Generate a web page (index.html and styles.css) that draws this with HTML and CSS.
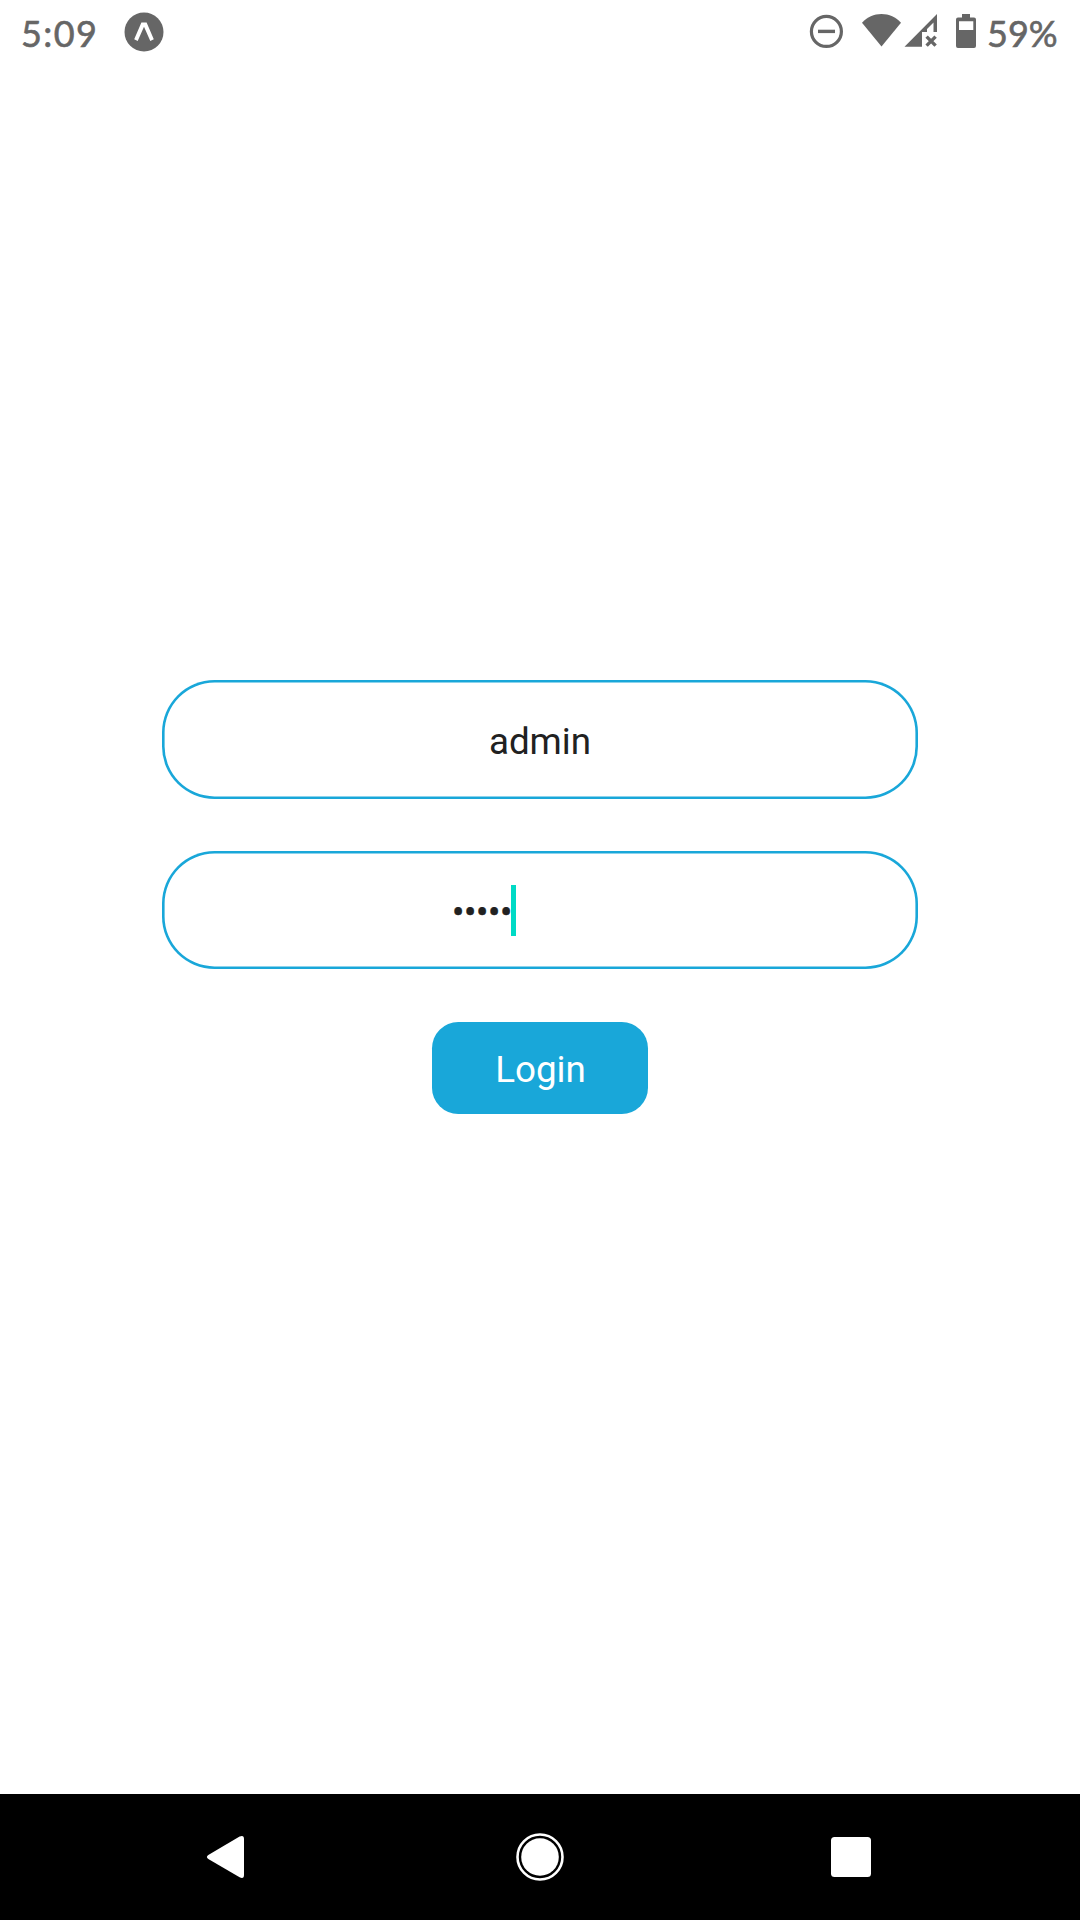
FILE: index.html
```html
<!DOCTYPE html>
<html lang="en">
<head>
<meta charset="utf-8">
<title>Login</title>
<link rel="stylesheet" href="styles.css">
</head>
<body>
<div class="screen">
  <header class="status">
    <span class="status-text clock">5:09</span>
    <svg class="expo" width="40" height="40" viewBox="0 0 40 40">
      <circle cx="20" cy="20" r="19.5" fill="#666"/>
      <path d="M10.200 27.200 17.400 10.500h5.200L29.800 27.200 26.300 28.900 20 14.800 13.700 28.900Z" fill="#fff"/>
    </svg>
    <svg class="system" width="170" height="60" viewBox="806 0 170 60">
      <circle cx="826.4" cy="31.4" r="15" fill="none" stroke="#666" stroke-width="3.2"/>
      <path d="M818 31.4h17" stroke="#666" stroke-width="3.4"/>
      <path d="M862 22.7C867 17 874 14 881.5 14S896 17 901 22.7L881.5 46.5Z" fill="#666"/>
      <path fill-rule="evenodd" d="M904.5 46.7 937 14V32H933.5V22.5L927 29V32H922V46.7Z" fill="#666"/>
      <path d="m926.6 36.6 9 9m0-9-9 9" stroke="#666" stroke-width="3.4"/>
      <path fill-rule="evenodd" d="M962 14h8v3.5h4q2 0 2 2v26.500q0 2-2 2H958q-2 0-2-2V19.500q0-2 2-2h4ZM959 21.300v8.700h14.300v-8.700Z" fill="#666"/>
    </svg>
    <span class="status-text battery">59%</span>
  </header>
  <main class="form">
    <div class="field"><span class="value">admin</span></div>
    <div class="field password"><span class="dots">•••••</span><span class="caret"></span></div>
    <div class="login"><span>Login</span></div>
  </main>
  <nav class="nav">
    <svg width="1080" height="126" viewBox="0 0 1080 126" fill="#fff">
      <path d="M208.300 61 239.600 42.500Q244 40.500 244 45V81Q244 85.300 239.600 83.300L208.300 65Q205.500 63 208.300 61Z"/>
      <circle cx="540" cy="63" r="22.500" fill="none" stroke="#fff" stroke-width="2.600"/>
      <circle cx="540" cy="63" r="18.800"/>
      <rect x="831" y="43" width="40" height="40" rx="3.500"/>
    </svg>
  </nav>
</div>
</body>
</html>
```
FILE: styles.css
```css
* { box-sizing: border-box; }
body { margin: 0; background: #fff; font-family: Roboto, sans-serif; }
.screen { width: 1080px; height: 1920px; display: flex; flex-direction: column; }
.status { height: 63px; display: flex; align-items: flex-start; padding-left: 21px; color: #666; }
.status-text { font: 400 36px/44px Lato, sans-serif; padding-top: 11px; -webkit-text-stroke: 0.6px #666; white-space: nowrap; }
.clock { width: 103px; letter-spacing: 1.4px; }
.expo { margin-top: 12px; }
.system { margin-left: 642px; overflow: visible; }
.battery { margin-left: 11px; }
.form { flex: 1; display: flex; flex-direction: column; align-items: center; padding-top: 617px; }
.field { width: 756px; height: 119px; margin-bottom: 52px; border-radius: 52.5px; box-shadow: inset 0 0 0 2.6px #19a7d9; display: flex; align-items: center; justify-content: center; font-size: 36.75px; line-height: 44px; color: #212121; }
.field.password { height: 118px; margin-bottom: 53px; justify-content: flex-start; padding-left: 290px; }
.value { padding-top: 4px; }
.dots { width: 59px; padding-top: 6px; letter-spacing: -0.4px; white-space: nowrap; -webkit-text-stroke: 0.4px #212121; }
.caret { width: 5px; height: 51px; background: #00dac5; }
.login { width: 216px; height: 92px; border-radius: 26.25px; background: #19a7d9; color: #fff; display: flex; align-items: center; justify-content: center; font-size: 36.75px; line-height: 44px; padding: 4px 0 0 1px; }
.nav { height: 126px; background: #000; }
.nav svg { display: block; }
```
